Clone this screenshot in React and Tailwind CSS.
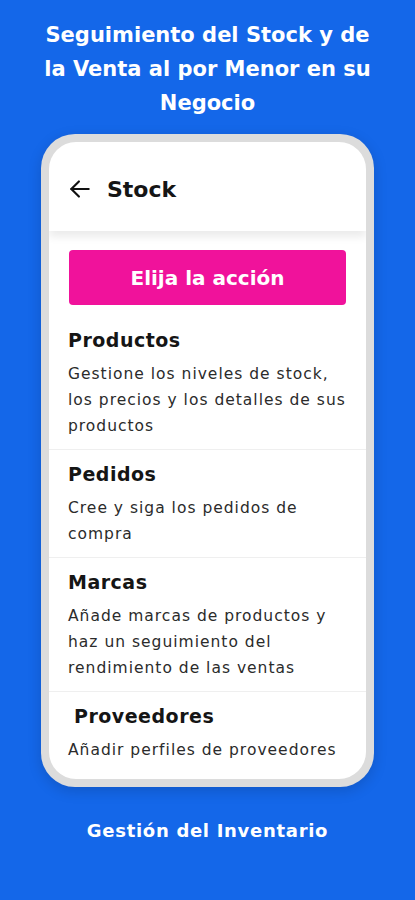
const sections = [
  {
    title: "Productos",
    desc: "Gestione los niveles de stock, los precios y los detalles de sus productos",
  },
  { title: "Pedidos", desc: "Cree y siga los pedidos de compra" },
  {
    title: "Marcas",
    desc: "Añade marcas de productos y haz un seguimiento del rendimiento de las ventas",
  },
  { title: "Proveedores", desc: "Añadir perfiles de proveedores", indent: true },
];

function BackArrow() {
  return (
    <svg width="26" height="26" viewBox="0 0 24 24" fill="none" stroke="#111" strokeWidth="2" strokeLinecap="round" strokeLinejoin="round">
      <path d="M20 12H4" />
      <path d="M11 5l-7 7 7 7" />
    </svg>
  );
}

export default function App() {
  return (
    <div
      className="flex min-h-[900px] w-full flex-col items-center bg-[#1467e9] text-white"
      style={{ fontFamily: '"DejaVu Sans", "Noto Sans", sans-serif' }}
    >
      <h1 className="mt-[18px] w-[350px] text-center text-[21px] font-bold leading-[34px]">
        Seguimiento del Stock y de la Venta al por Menor en su Negocio
      </h1>

      <div className="mt-[14px] h-[653px] w-[333px] rounded-[34px] bg-[#dcdcdc] p-[8px] shadow-[0_4px_14px_rgba(0,0,0,0.15)]">
        <div className="h-full overflow-hidden rounded-[27px] bg-white text-[#151515]">
          <div className="relative z-10 flex h-[89px] items-center gap-[14px] px-[18px] pt-[5px] shadow-[0_6px_8px_rgba(0,0,0,0.08)]">
            <BackArrow />
            <span className="text-[22px] font-semibold">Stock</span>
          </div>

          <div className="px-[20px] pt-[19px] pb-[11px]">
            <button className="flex h-[55px] w-full items-center justify-center rounded-[4px] bg-[#f0129b] text-[20px] font-bold text-white">
              Elija la acción
            </button>
          </div>

          {sections.map((s, i) => (
            <div
              key={s.title}
              className={
                "px-[19px] pb-[10px] pt-[7px] " +
                (i < sections.length - 1 ? "border-b border-[#efefef]" : "")
              }
            >
              <h2
                className={
                  "text-[19px] font-semibold leading-[34px] tracking-[0.5px] " +
                  (s.indent ? "pl-[6px]" : "")
                }
              >
                {s.title}
              </h2>
              <p className="mt-[4px] text-[15.5px] leading-[26px] tracking-[1px] text-[#2b2b2b]">
                {s.desc}
              </p>
            </div>
          ))}
        </div>
      </div>

      <p className="mt-[30px] text-[18px] font-bold tracking-[0.7px]">Gestión del Inventario</p>
    </div>
  );
}
